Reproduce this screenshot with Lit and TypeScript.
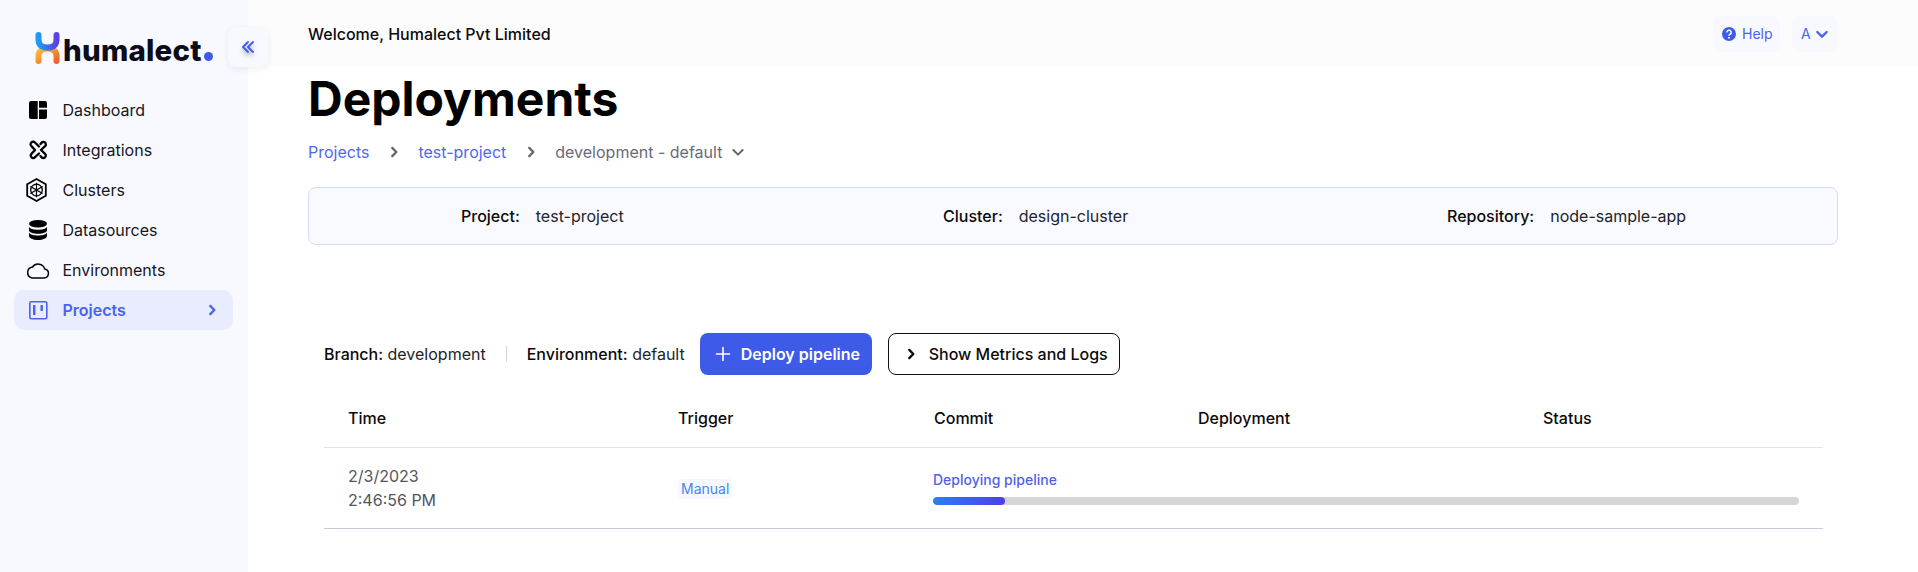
import { LitElement, css, html, svg } from "lit";
import { customElement } from "lit/decorators.js";

const icons: Record<string, any> = {
  dashboard: svg`<path fill="currentColor" d="M5 2h6.700v18H5a2 2 0 0 1-2-2V4a2 2 0 0 1 2-2zM13 2h6a2 2 0 0 1 2 2v4.700h-8zM13 10.500h8V18a2 2 0 0 1-2 2h-6z"/>`,
  integrations: svg`<g fill="none" stroke="currentColor" stroke-width="2.300" stroke-linecap="round" stroke-linejoin="round"><path d="M13 7.500 9 3.500a2.300 2.300 0 0 0-3.600 0 2.300 2.300 0 0 0 0 3.600L9 11l-3.600 3.900a2.300 2.300 0 0 0 0 3.300 2.300 2.300 0 0 0 3.600 0l4-3.700"/><path d="M14.500 5l1-1.300a2.300 2.300 0 0 1 3.600 0 2.300 2.300 0 0 1 0 3.400L15 11l4.100 3.900a2.300 2.300 0 0 1 0 3.300 2.300 2.300 0 0 1-3.600 0L14.500 17"/></g>`,
  clusters: svg`<g fill="none" stroke="currentColor"><path stroke-width="1.800" d="M10.500 0 19.800 5.200V16.800L10.500 22 1.200 16.800V5.200Z"/><circle cx="10.500" cy="11" r="5.800" stroke-width="1.300"/><path stroke-width="1.200" d="M10.500 3.800v14.400M4.300 7.400l12.400 7.200M16.700 7.400 4.300 14.600"/></g>`,
  data: svg`<g fill="currentColor"><ellipse cx="12" cy="4.800" rx="9" ry="3.800"/><path d="M3 7.800c1 2.200 5 3 9 3s8-.8 9-3v3.500c0 2-4 3.500-9 3.500S3 13.300 3 11.300z"/><path d="M3 13.500c1 2.200 5 3 9 3s8-.8 9-3V17c0 2.300-4 4-9 4s-9-1.700-9-4z"/></g>`,
  cloud: svg`<path fill="none" stroke="currentColor" stroke-width="1.500" d="M6 19h12a4.600 4.600 0 0 0 .8-9.100A7 7 0 0 0 6.500 8 5.600 5.600 0 0 0 6 19z"/>`,
  projects: svg`<rect x="3.800" y="2.800" width="17" height="17" rx="1.500" fill="none" stroke="currentColor" stroke-width="1.600"/><path fill="currentColor" d="M7 6h2.400v10H7zM14.500 6h2.400v6h-2.400z"/>`,
};

const navItems = [
  { label: "Dashboard", icon: "dashboard" },
  { label: "Integrations", icon: "integrations" },
  { label: "Clusters", icon: "clusters" },
  { label: "Datasources", icon: "data" },
  { label: "Environments", icon: "cloud" },
  { label: "Projects", icon: "projects", active: true },
];

const chevron = (size = 12, stroke = 2) => html`<svg width=${size} height=${size} viewBox="0 0 12 12" fill="none" stroke="currentColor" stroke-width=${stroke} stroke-linecap="round" stroke-linejoin="round"><path d="M4.500 2.500 8 6l-3.500 3.500"/></svg>`;
const chevronDown = (size = 12, stroke = 2) => html`<svg width=${size} height=${size} viewBox="0 0 12 12" fill="none" stroke="currentColor" stroke-width=${stroke} stroke-linecap="round" stroke-linejoin="round"><path d="M2.500 4.500 6 8l3.500-3.500"/></svg>`;

@customElement("app-root")
export class AppRoot extends LitElement {
  static styles = css`
    :host {
      display: block;
      height: 572px;
      font-family: Inter, "Liberation Sans", sans-serif;
      font-size: 16px;
      color: #0b0b12;
      overflow: hidden;
      background: #fff;
    }
    .layout {
      display: flex;
      height: 572px;
    }
    .sidebar {
      width: 248px;
      flex: none;
      background: #f8f9fe;
      padding: 0 15px 0 14px;
      box-sizing: border-box;
    }
    .logo {
      height: 90px;
      display: flex;
      align-items: flex-start;
      padding: 31px 0 0 21px;
      box-sizing: border-box;
    }
    .logo svg {
      flex: none;
    }
    .wordmark {
      font-weight: 800;
      font-size: 29.500px;
      letter-spacing: 0.200px;
      line-height: 32px;
      margin: 3px 0 0 3px;
      color: #0c0c1c;
      white-space: nowrap;
    }
    .wordmark i {
      display: inline-block;
      width: 9px;
      height: 9px;
      border-radius: 50%;
      background: #3d5be8;
      margin-left: 2px;
    }
    nav {
      display: flex;
      flex-direction: column;
    }
    .nav-item {
      height: 40px;
      display: flex;
      align-items: center;
      border-radius: 10px;
      padding: 0 14px 0 12px;
      color: #16161f;
    }
    .nav-item svg.icon {
      width: 24px;
      height: 22px;
      margin-right: 12.500px;
      color: #000;
      overflow: visible;
    }
    .nav-item.active {
      background: #e8ecfc;
      color: #4a63ee;
      font-weight: 600;
    }
    .nav-item.active svg.icon {
      color: #4a63ee;
    }
    .nav-item span {
      flex: 1;
    }
    .main {
      flex: 1;
      min-width: 0;
      position: relative;
    }
    .collapse {
      position: absolute;
      left: -20px;
      top: 27px;
      width: 40px;
      height: 40px;
      border-radius: 8px;
      background: #f8f9fe;
      box-shadow: 0 2px 6px rgba(40, 50, 90, 0.08);
      display: flex;
      align-items: center;
      justify-content: center;
      color: #3d5be8;
    }
    .collapse svg {
      filter: drop-shadow(0 3px 2px rgba(0, 0, 0, 0.3));
    }
    .topbar {
      height: 67px;
      background: #fcfcfd;
      display: flex;
      align-items: center;
      padding: 0 0 0 60px;
      font-weight: 500;
      color: #0b0b0b;
    }
    .topbar .welcome {
      flex: 1;
    }
    .top-btn {
      height: 36px;
      display: flex;
      align-items: center;
      background: #f8f9fe;
      border-radius: 8px;
      color: #4a63ee;
      font-size: 14px;
      font-weight: 400;
      box-sizing: border-box;
    }
    .help {
      width: 67px;
      padding-left: 9px;
      gap: 6px;
      margin-right: 12px;
    }
    .user {
      width: 46px;
      padding-left: 9px;
      gap: 3px;
      margin-right: 80px;
    }
    .content {
      padding: 0 20px 0 60px;
    }
    h1 {
      margin: 0;
      font-size: 48px;
      font-weight: 700;
      line-height: 64px;
      color: #000;
    }
    .crumbs {
      display: flex;
      align-items: center;
      margin-top: 9px;
      line-height: 24px;
      color: #6b6b76;
    }
    .crumbs a {
      color: #4f68ee;
    }
    .crumbs svg {
      margin: 0 17.500px;
      color: #666;
    }
    .crumbs svg.down {
      margin: 0 0 0 8px;
    }
    .summary {
      margin-top: 23px;
      width: 1530px;
      height: 58px;
      box-sizing: border-box;
      background: #f8faff;
      border: 1px solid #d3dcf5;
      border-radius: 8px;
      display: grid;
      grid-template-columns: 482px 504px 1fr;
      align-items: center;
      color: #23232b;
    }
    .summary div {
      padding-left: 152px;
      display: flex;
      gap: 16px;
    }
    .summary b {
      font-weight: 500;
      color: #0b0b0b;
    }
    .deploy-bar {
      display: flex;
      align-items: center;
      margin: 88px 0 0 16px;
      height: 42px;
      color: #23232b;
    }
    .deploy-bar b {
      font-weight: 500;
      color: #0b0b0b;
    }
    .sep {
      width: 1px;
      height: 16px;
      background: #d5d5d8;
      margin: 0 20px;
    }
    .btn {
      height: 42px;
      box-sizing: border-box;
      display: flex;
      align-items: center;
      border-radius: 8px;
      font-weight: 500;
    }
    .btn.primary {
      margin-left: 15px;
      width: 172px;
      padding-left: 15px;
      gap: 10px;
      background: #3d5be8;
      color: #fff;
      font-weight: 600;
    }
    .btn.outline {
      margin-left: 16px;
      width: 232px;
      padding-left: 15px;
      border: 1px solid #111;
      color: #0b0b0b;
      gap: 11px;
    }
    .table {
      margin-left: 16px;
      width: 1499px;
    }
    .row {
      display: grid;
      grid-template-columns: 330px 256px 264px 345px 1fr;
      padding-left: 24px;
    }
    .head {
      height: 73px;
      padding-top: 14px;
      box-sizing: border-box;
      align-items: center;
      font-weight: 500;
      border-bottom: 1px solid #e2e4e8;
      color: #0b0b0b;
    }
    .body {
      height: 81px;
      box-sizing: border-box;
      border-bottom: 1px solid #c4cad6;
      align-items: center;
      grid-template-columns: 330px 255px 1fr;
      padding-right: 24px;
    }
    .time {
      line-height: 24px;
      color: #55555e;
    }
    .tag {
      display: inline-block;
      font-size: 14px;
      line-height: 20px;
      padding: 0 3px;
      color: #4a84f0;
      background: #f5f9ff;
      border-radius: 3px;
    }
    .progress-label {
      font-size: 14px;
      font-weight: 500;
      line-height: 18px;
      color: #4f62e6;
      margin-bottom: 8px;
    }
    .track {
      height: 8px;
      border-radius: 4px;
      background: #d6d6d6;
      overflow: hidden;
    }
    .fill {
      height: 100%;
      border-radius: 4px;
      background: linear-gradient(90deg, #2a80f2, #4f3fe6);
    }
  `;

  render() {
    return html`
      <div class="layout">
        <aside class="sidebar">
          <div class="logo">
            <svg width="25" height="34" viewBox="0 0 25 34" fill="none" stroke-width="6" stroke-linecap="round">
              <defs>
                <linearGradient id="lgTop" x1="0" y1="0" x2="1" y2="0"><stop offset="0" stop-color="#1e9bf5"/><stop offset="1" stop-color="#5b3fe0"/></linearGradient>
                <linearGradient id="lgBot" x1="0" y1="0" x2="1" y2="1"><stop offset="0" stop-color="#fbc33a"/><stop offset="1" stop-color="#f0632c"/></linearGradient>
              </defs>
              <path stroke="url(#lgBot)" d="M3.500 30v-5c0-4.500 3-7.500 9-7.500s9 3 9 7.500v5"/>
              <path stroke="url(#lgTop)" d="M3.500 4v5c0 4.500 3 7.500 9 7.500s9-3 9-7.500V4"/>
            </svg>
            <div class="wordmark">humalect<i></i></div>
          </div>
          <nav>
            ${navItems.map(
              (item) => html`
                <div class="nav-item ${item.active ? "active" : ""}">
                  <svg class="icon" viewBox="0 0 24 22">${icons[item.icon]}</svg>
                  <span>${item.label}</span>
                  ${item.active ? chevron(14, 2) : ""}
                </div>
              `
            )}
          </nav>
        </aside>
        <div class="main">
          <div class="collapse">
            <svg width="16" height="16" viewBox="0 0 16 16" fill="none" stroke="currentColor" stroke-width="1.800" stroke-linecap="round" stroke-linejoin="round"><path d="M8 3 3 8l5 5M13 3 8 8l5 5"/></svg>
          </div>
          <div class="topbar">
            <div class="welcome">Welcome, Humalect Pvt Limited</div>
            <div class="top-btn help">
              <svg width="14" height="14" viewBox="0 0 15 15"><circle cx="7.500" cy="7.500" r="7.500" fill="#3d5be8"/><path d="M5.200 5.800a2.300 2.300 0 1 1 3.400 2c-.8.400-1.100.8-1.100 1.500" fill="none" stroke="#fff" stroke-width="1.600"/><circle cx="7.500" cy="11.500" r="1" fill="#fff"/></svg>
              Help
            </div>
            <div class="top-btn user">A ${chevronDown(16, 1.800)}</div>
          </div>
          <div class="content">
            <h1>Deployments</h1>
            <div class="crumbs">
              <a>Projects</a>${chevron(14, 2)}<a>test-project</a>${chevron(14, 2)}<span>development - default</span>
              <svg class="down" width="16" height="16" viewBox="0 0 12 12" fill="none" stroke="currentColor" stroke-width="1.500" stroke-linecap="round" stroke-linejoin="round"><path d="M2.500 4.500 6 8l3.500-3.500"/></svg>
            </div>
            <div class="summary">
              <div><b>Project:</b> test-project</div>
              <div><b>Cluster:</b> design-cluster</div>
              <div><b>Repository:</b> node-sample-app</div>
            </div>
            <div class="deploy-bar">
              <span><b>Branch:</b> development</span>
              <i class="sep"></i>
              <span><b>Environment:</b> default</span>
              <div class="btn primary">
                <svg width="16" height="16" viewBox="0 0 16 16" stroke="currentColor" stroke-width="1.600" stroke-linecap="round"><path d="M8 1.500v13M1.500 8h13"/></svg>
                Deploy pipeline
              </div>
              <div class="btn outline">${chevron(14, 2)} Show Metrics and Logs</div>
            </div>
            <div class="table">
              <div class="row head">
                <div>Time</div><div>Trigger</div><div>Commit</div><div>Deployment</div><div>Status</div>
              </div>
              <div class="row body">
                <div class="time">2/3/2023<br />2:46:56 PM</div>
                <div><span class="tag">Manual</span></div>
                <div>
                  <div class="progress-label">Deploying pipeline</div>
                  <div class="track"><div class="fill" style="width: ${(72 / 865) * 100}%"></div></div>
                </div>
              </div>
            </div>
          </div>
        </div>
      </div>
    `;
  }
}
